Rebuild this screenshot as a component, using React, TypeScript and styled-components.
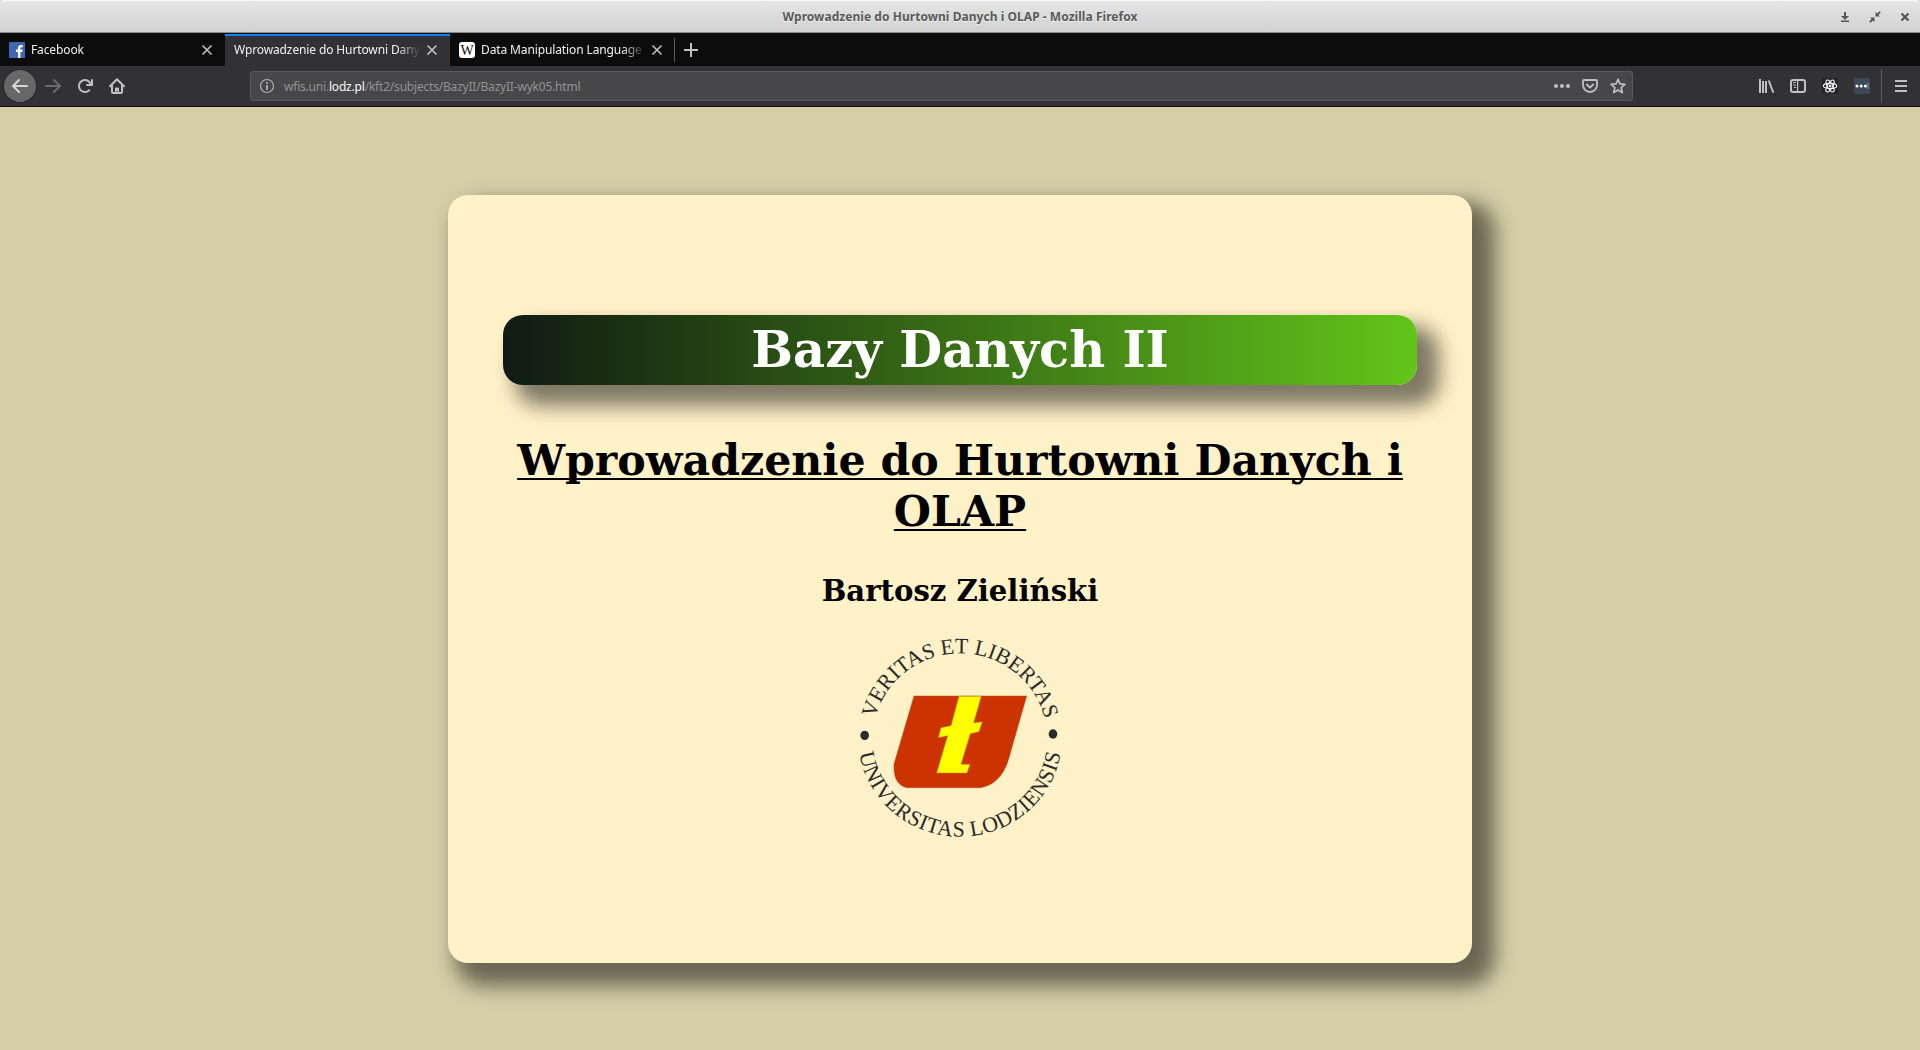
import React from "react";
import styled, { createGlobalStyle } from "styled-components";

const Global = createGlobalStyle`
  * { box-sizing: border-box; }
  body { margin: 0; background: #d6cea7; overflow: hidden; }
`;

const Window = styled.div`
  width: 1920px;
  height: 1050px;
  display: flex;
  flex-direction: column;
  font-family: "Noto Sans", "Open Sans", sans-serif;
  font-size: 12px;
`;

const TitleBar = styled.header`
  height: 33px;
  display: grid;
  grid-template-columns: 1fr auto 1fr;
  align-items: center;
  background: linear-gradient(#e6e6e6, #d1d1d1);
  border-top: 1px solid #f7f7f7;
  border-bottom: 1px solid #8a8a8a;
  border-radius: 3px 3px 0 0;
`;

const WindowTitle = styled.div`
  grid-column: 2;
  color: #5b5b5b;
  font-weight: 700;
  font-size: 12px;
  line-height: 17px;
  letter-spacing: 0.045px;
  white-space: nowrap;
  text-shadow: 0 1px 0 #eee;
`;

const WindowButtons = styled.div`
  justify-self: end;
  display: flex;
  gap: 18px;
  padding-right: 9px;
`;

const TabStrip = styled.nav`
  height: 33px;
  display: flex;
  background: #0c0c0d;
`;

const Tab = styled.div<{ $active?: boolean; $last?: boolean }>`
  width: ${(p) => (p.$last ? 224 : 225)}px;
  height: 33px;
  display: flex;
  align-items: center;
  padding: 1px ${(p) => (p.$last ? 11 : 12)}px 0 9px;
  background: ${(p) => (p.$active ? "#323234" : "#0c0c0d")};
  box-shadow: ${(p) => (p.$active ? "inset 0 1px #0c0c0d, inset 0 3px #0a84ff" : "none")};
  color: #f0f0f2;
`;

const Favicon = styled.svg`
  width: 16px;
  height: 16px;
  margin-right: 6px;
  flex: none;
`;

const TabLabel = styled.div`
  flex: 1;
  min-width: 0;
  overflow: hidden;
  white-space: nowrap;
  line-height: 18px;
  letter-spacing: -0.12px;
  margin-right: 5px;
  mask-image: linear-gradient(to left, transparent, #000 24px);
`;

const TabActions = styled.div`
  display: flex;
  align-items: center;
  height: 33px;
`;

const Divider = styled.span<{ $h: number }>`
  width: 1px;
  height: ${(p) => p.$h}px;
  background: #5d5d60;
`;

const Toolbar = styled.div`
  height: 41px;
  display: flex;
  align-items: center;
  background: #323234;
  border-bottom: 1px solid #0c0c0d;
`;

const NavButtons = styled.div`
  width: 250px;
  display: flex;
  align-items: center;
  gap: 16px;
  padding-left: 4px;
`;

const BackButton = styled.div`
  width: 32px;
  height: 32px;
  display: grid;
  place-items: center;
  border-radius: 50%;
  background: #676768;
  box-shadow: 0 0 0 1px #28282a;
  margin-right: -7px;
`;

const AddressBar = styled.div`
  width: 1383px;
  height: 30px;
  display: flex;
  align-items: center;
  padding: 0 6px 0 8px;
  background: #474749;
  border: 1px solid #5a5a5c;
  border-radius: 3px;
`;

const Url = styled.div`
  flex: 1;
  margin-left: 9px;
  color: #929294;
  line-height: 18px;
  padding-top: 1px;
  letter-spacing: -0.2px;
  white-space: nowrap;
`;

const Host = styled.span`
  color: #f9f9fa;
`;

const PageActions = styled.div`
  display: flex;
  gap: 12px;
`;

const ToolActions = styled.div`
  flex: 1;
  display: flex;
  align-items: center;
  justify-content: flex-end;
  padding-right: 11px;
`;

const ToolIcons = styled.div`
  display: flex;
  gap: 16px;
  margin-right: 11px;
`;

const MenuSlot = styled.div`
  display: flex;
  margin-left: 11px;
`;

const Page = styled.main`
  flex: 1;
  padding-top: 88px;
  background: #d6cea7;
`;

const Slide = styled.section`
  width: 1024px;
  height: 768px;
  margin: 0 auto;
  padding: 120px 55px 0;
  display: flex;
  flex-direction: column;
  align-items: center;
  background: #fff1c8;
  border-radius: 20px;
  box-shadow: 15px 15px 20px 8px rgba(0, 0, 0, 0.5);
  font-family: "DejaVu Serif", serif;
  font-weight: 700;
  text-align: center;
`;

const Banner = styled.h1`
  width: 914px;
  height: 70px;
  margin: 0;
  border-radius: 20px;
  background: linear-gradient(to right, #101a12, #62c519);
  box-shadow: 17px 16px 20px 5px rgba(0, 0, 0, 0.5);
  color: #fff;
  font-size: 49.5px;
  line-height: 71px;
`;

const Heading = styled.h2`
  margin: 50px 0 0;
  font-size: 42.66px;
  line-height: 51px;
  text-decoration: underline;
  text-decoration-thickness: 2px;
  text-underline-offset: 3px;
  text-decoration-skip-ink: none;
`;

const Author = styled.h3`
  margin: 37px 0 0;
  font-size: 29.15px;
  line-height: 35px;
`;

const Crest = styled.svg`
  width: 240px;
  height: 230px;
  margin-top: 11px;
  flex: none;
`;

const Glyph = ({
  children,
  color = "#c0c0c2",
  size = 16,
}: {
  children: React.ReactNode;
  color?: string;
  size?: number;
}) => (
  <svg width={size} height={size} viewBox={`0 0 ${size} ${size}`} fill={color} stroke="none" color={color}>
    {children}
  </svg>
);

const CloseIcon = () => (
  <Glyph size={12}>
    <path d="M1.5 1.5l9 9m0-9l-9 9" stroke="currentColor" strokeWidth="1.6" />
  </Glyph>
);

const FacebookIcon = () => (
  <Favicon viewBox="0 0 16 16">
    <rect width="16" height="16" rx="1" fill="#4267b2" />
    <path d="M9 16V10H7V7.6h2V6c0-2 1.200-3 3-3h1.700v2.200h-1.200c-.9 0-1.100.5-1.100 1.200v1.200h2.200L13.300 10h-1.900v6z" fill="#fff" />
  </Favicon>
);

const WikipediaIcon = () => (
  <Favicon viewBox="0 0 16 16">
    <rect width="16" height="16" rx="3" fill="#fff" />
    <text x="8" y="12.500" textAnchor="middle" fontFamily="Liberation Serif" fontSize="14" fill="#111">
      W
    </text>
  </Favicon>
);

const UniversityCrest = () => (
  <Crest viewBox="0 0 720 690">
    <defs>
      <path id="upper" d="M106.500 296 A260 252 0 0 1 613.500 296" />
      <path id="lower" d="M58 400 A306 298 0 0 0 662 400" />
    </defs>
    <g fontFamily="Liberation Serif" fontWeight="400" fontSize="66" fill="#2b2b2b">
      <text>
        <textPath href="#upper" textLength="692" lengthAdjust="spacing">
          VERITAS ET LIBERTAS
        </textPath>
      </text>
      <text>
        <textPath href="#lower" textLength="852" lengthAdjust="spacing">
          UNIVERSITAS LODZIENSIS
        </textPath>
      </text>
    </g>
    <ellipse cx="74" cy="346" rx="13" ry="14" fill="#2b2b2b" />
    <ellipse cx="639" cy="342" rx="13" ry="14" fill="#2b2b2b" />
    <path
      d="M222 228H560L505 420C492 465 462 497 422 503H200C172 495 160 475 162 432Z"
      fill="#cc3300"
      stroke="#a8551c"
      strokeWidth="1.500"
    />
    <path
      d="M357 229H424L401 309L427 305L417 335L391 341L363 433H390L381 459H290L323 347L295 353L303 323L333 317Z"
      fill="#ffff00"
      stroke="#b08a10"
      strokeWidth="1.500"
    />
  </Crest>
);

export default function App() {
  return (
    <Window>
      <Global />
      <TitleBar>
        <WindowTitle>Wprowadzenie do Hurtowni Danych i OLAP - Mozilla Firefox</WindowTitle>
        <WindowButtons>
          <Glyph size={12} color="#555">
            <path d="M5 1h2v4h3L6 9 2 5h3zM2 9.500h8v1.500H2z" />
          </Glyph>
          <Glyph size={12} color="#555">
            <path d="M6.500 5.500V1l1.600 1.600L10.500.2l1.300 1.300-2.400 2.400L11 5.500zM5.500 6.500V11L3.900 9.400 1.500 11.800.2 10.500l2.400-2.400L1 6.500z" />
          </Glyph>
          <Glyph size={12} color="#555">
            <path d="M2.500 2.500l7 7m0-7l-7 7" stroke="currentColor" strokeWidth="2.200" />
          </Glyph>
        </WindowButtons>
      </TitleBar>

      <TabStrip>
        <Tab>
          <FacebookIcon />
          <TabLabel>Facebook</TabLabel>
          <CloseIcon />
        </Tab>
        <Tab $active>
          <TabLabel>Wprowadzenie do Hurtowni Danych</TabLabel>
          <CloseIcon />
        </Tab>
        <Tab $last>
          <WikipediaIcon />
          <TabLabel>Data Manipulation Language -</TabLabel>
          <CloseIcon />
        </Tab>
        <TabActions>
          <Divider $h={24} />
          <svg width="32" height="16" viewBox="0 0 32 16">
            <path d="M16 1v14M9 8h14" stroke="#c0c0c2" strokeWidth="2" />
          </svg>
        </TabActions>
      </TabStrip>

      <Toolbar>
        <NavButtons>
          <BackButton>
            <Glyph color="#d6d6d7">
              <path d="M15 7H3.414l4.293-4.293a1 1 0 0 0-1.414-1.414l-6 6a1 1 0 0 0 0 1.414l6 6a1 1 0 0 0 1.414-1.414L3.414 9H15a1 1 0 0 0 0-2z" />
            </Glyph>
          </BackButton>
          <Glyph color="#6b6b6d">
            <path d="M15.707 7.293l-6-6a1 1 0 0 0-1.414 1.414L12.586 7H1a1 1 0 0 0 0 2h11.586l-4.293 4.293a1 1 0 1 0 1.414 1.414l6-6a1 1 0 0 0 0-1.414z" />
          </Glyph>
          <Glyph>
            <path d="M15 1a1 1 0 0 0-1 1v2.418A6.995 6.995 0 1 0 8 15a6.954 6.954 0 0 0 4.950-2.050 1 1 0 0 0-1.414-1.414A5.019 5.019 0 1 1 12.549 6H10a1 1 0 0 0 0 2h5a1 1 0 0 0 1-1V2a1 1 0 0 0-1-1z" />
          </Glyph>
          <Glyph>
            <path d="M1 8.200L8 1.200l7 7M3 7.500V14a1 1 0 0 0 1 1h8a1 1 0 0 0 1-1V7.500" fill="none" stroke="currentColor" strokeWidth="2" strokeLinecap="round" strokeLinejoin="round" />
            <path d="M6 15v-4.500a1 1 0 0 1 1-1h2a1 1 0 0 1 1 1V15H8.800v-2H7.500v2z" />
          </Glyph>
        </NavButtons>
        <AddressBar>
          <Glyph color="#b1b1b3">
            <circle cx="8" cy="8" r="6.500" fill="none" stroke="currentColor" strokeWidth="1.200" />
            <path d="M7.100 4h1.800v1.800H7.100zM7.100 7h1.800v5H7.100z" />
          </Glyph>
          <Url>
            wfis.uni.<Host>lodz.pl</Host>/kft2/subjects/BazyII/BazyII-wyk05.html
          </Url>
          <PageActions>
            <Glyph>
              <circle cx="2" cy="8" r="2" />
              <circle cx="8" cy="8" r="2" />
              <circle cx="14" cy="8" r="2" />
            </Glyph>
            <Glyph>
              <path d="M2 2h12a1 1 0 0 1 1 1v4a7 7 0 0 1-14 0V3a1 1 0 0 1 1-1z" fill="none" stroke="currentColor" strokeWidth="1.800" />
              <path d="M4.800 6.500L8 9.500l3.200-3" fill="none" stroke="currentColor" strokeWidth="1.800" strokeLinecap="round" strokeLinejoin="round" />
            </Glyph>
            <Glyph>
              <path d="M8 1.300l2 4.500 4.900.5-3.700 3.300 1.100 5L8 12l-4.300 2.600 1.100-5L1.100 6.300 6 5.800z" fill="none" stroke="currentColor" strokeWidth="1.700" strokeLinejoin="round" />
            </Glyph>
          </PageActions>
        </AddressBar>
        <ToolActions>
          <ToolIcons>
            <Glyph>
              <path d="M1 1h2v14H1zM4 3h2v12H4zM7 3h2v12H7z" />
              <path d="M10.700 2.500L15.300 14.700" stroke="currentColor" strokeWidth="2" />
            </Glyph>
            <Glyph>
              <rect x="1" y="2" width="14" height="12" rx="2" fill="none" stroke="currentColor" strokeWidth="2" />
              <path d="M7 2h1.200v12H7zM3 4h3v1H3zM3 6.500h3v1H3zM4 9h2v1H4z" />
            </Glyph>
            <Glyph color="#f5f5f5">
              <rect width="16" height="16" fill="#252528" />
              <g fill="none" stroke="currentColor" strokeWidth="1.100">
                <ellipse cx="8" cy="8" rx="6.700" ry="2.600" />
                <ellipse cx="8" cy="8" rx="6.700" ry="2.600" transform="rotate(60 8 8)" />
                <ellipse cx="8" cy="8" rx="6.700" ry="2.600" transform="rotate(120 8 8)" />
              </g>
              <circle cx="8" cy="8" r="1.300" />
            </Glyph>
            <Glyph color="#fff">
              <rect width="16" height="16" rx="1" fill="#3d4858" />
              <circle cx="3" cy="8" r="1.500" />
              <circle cx="7.200" cy="8" r="1.500" />
              <circle cx="11.400" cy="8" r="1.500" />
              <path d="M13.500 5h1v6h-1z" fill="#929ba8" />
            </Glyph>
          </ToolIcons>
          <Divider $h={34} />
          <MenuSlot>
            <Glyph>
              <path d="M2 2h12v2H2zM2 7h12v2H2zM2 12h12v2H2z" />
            </Glyph>
          </MenuSlot>
        </ToolActions>
      </Toolbar>

      <Page>
        <Slide>
          <Banner>Bazy Danych II</Banner>
          <Heading>Wprowadzenie do Hurtowni Danych i OLAP</Heading>
          <Author>Bartosz Zieliński</Author>
          <UniversityCrest />
        </Slide>
      </Page>
    </Window>
  );
}
